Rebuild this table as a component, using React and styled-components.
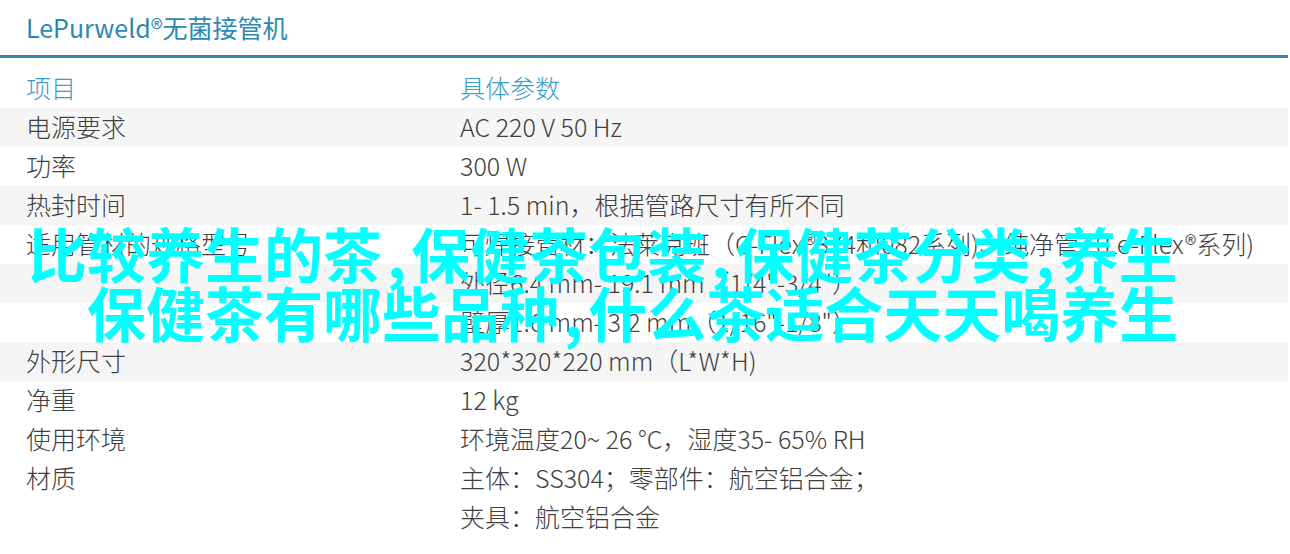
import React from "react";
import styled, { createGlobalStyle } from "styled-components";

const GlobalStyle = createGlobalStyle`
  html, body {
    margin: 0;
    padding: 0;
    background: #ffffff;
  }
  body {
    font-family: "Noto Sans CJK SC", "Noto Sans", sans-serif;
  }
`;

const Page = styled.div`
  position: relative;
  width: 1290px;
  height: 554px;
  overflow: hidden;
  background: #fff;
`;

const Header = styled.div`
  height: 55px;
  display: flex;
  align-items: center;
  padding-left: 26px;
  border-bottom: 3px solid #2d89b1;
  width: 1262px;
`;

const Title = styled.h1`
  margin: 0;
  font-size: 25px;
  font-weight: 400;
  color: #2b88b2;
  line-height: 1;
`;

const Table = styled.div`
  margin-top: 11px;
  width: 1288px;
`;

const Row = styled.div`
  display: grid;
  grid-template-columns: 434px 1fr;
  padding-left: 26px;
  background: ${(p) => (p.$striped ? "#f5f5f5" : "transparent")};
`;

const Cell = styled.div`
  font-size: 25px;
  line-height: 39px;
  font-weight: 300;
  color: ${(p) => (p.$head ? "#3a9cc9" : "#404040")};
  white-space: nowrap;
  transform: translateY(-1px);
`;

const Overlay = styled.div`
  position: absolute;
  top: 223px;
  left: 0;
  width: 1290px;
  pointer-events: none;
`;

const Line = styled.div`
  padding-left: ${(p) => p.$indent}px;
  font-size: 59px;
  line-height: 59px;
  font-weight: 700;
  color: #00ffff;
  white-space: nowrap;
`;

const Comma = styled.span`
  margin: 0 5px;
`;

const rows = [
  { k: "电源要求", v: ["AC 220 V 50 Hz"], striped: true },
  { k: "功率", v: ["300 W"] },
  { k: "热封时间", v: ["1- 1.5 min，根据管路尺寸有所不同"], striped: true },
  { k: "适用管材的规格型号", v: ["可焊接管材：法莱克班（C-Flex®374和082系列)、纯净管（Le-Flex®系列)"] },
  { k: "", v: ["外径6.4 mm- 19.1 mm（1/4\"-3/4\"）"], striped: true },
  { k: "", v: ["壁厚1.6 mm- 3.2 mm（1/16\"-1/8\"）"] },
  { k: "外形尺寸", v: ["320*320*220 mm（L*W*H)"], striped: true },
  { k: "净重", v: ["12 kg"] },
  { k: "使用环境", v: ["环境温度20~ 26 °C，湿度35- 65% RH"] },
  { k: "材质", v: ["主体：SS304；零部件：航空铝合金；", "夹具：航空铝合金"] },
];

export default function App() {
  return (
    <Page>
      <GlobalStyle />
      <Header>
        <Title>LePurweld®无菌接管机</Title>
      </Header>
      <Table>
        <Row>
          <Cell $head>项目</Cell>
          <Cell $head>具体参数</Cell>
        </Row>
        {rows.map((r, i) => (
          <Row key={i} $striped={r.striped}>
            <Cell>{r.k}</Cell>
            <div>
              {r.v.map((t, j) => (
                <Cell key={j}>{t}</Cell>
              ))}
            </div>
          </Row>
        ))}
      </Table>
      <Overlay>
        <Line $indent={28}>
          比较养生的茶<Comma>,</Comma>保健茶包装<Comma>,</Comma>保健茶分类<Comma>,</Comma>养生
        </Line>
        <Line $indent={87}>
          保健茶有哪些品种<Comma>,</Comma>什么茶适合天天喝养生
        </Line>
      </Overlay>
    </Page>
  );
}
